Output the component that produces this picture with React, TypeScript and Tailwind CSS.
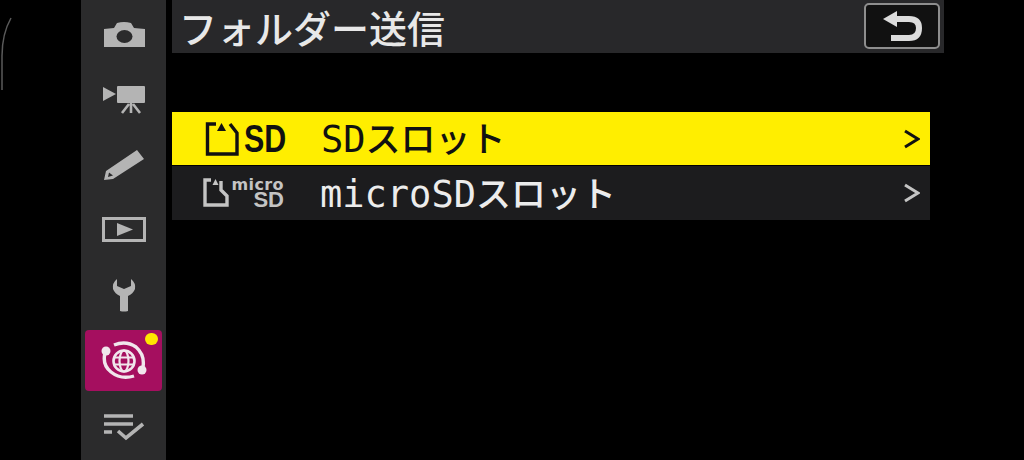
const ICON = '#b4b4b4';

function CameraIcon() {
  return (
    <svg width="44" height="28" viewBox="0 0 44 28">
      <path
        d="M2 8 L12 7 L15 2 Q22 0 29 2 L32 7 L43 8 L43 26 L2 26 Z"
        fill={ICON}
      />
      <ellipse cx="22.5" cy="15.5" rx="8" ry="6.5" fill="#2b2b2c" />
    </svg>
  );
}

function MovieIcon() {
  return (
    <svg width="44" height="30" viewBox="0 0 44 30">
      <path d="M1 2 L14 9 L1 16 Z" fill={ICON} />
      <rect x="15" y="1" width="28" height="17" rx="1" fill={ICON} />
      <path
        d="M29 18 V28 M27 19 L20 28 M31 19 L38 28"
        stroke={ICON}
        strokeWidth="2.6"
        fill="none"
      />
    </svg>
  );
}

function PencilIcon() {
  return (
    <svg width="42" height="34" viewBox="0 0 42 34">
      <path
        fillRule="evenodd"
        d="M1 32 L3 23 L34 2 L41 11 L10 31 Z M5 29 L10 27.5 L6 24.5 Z"
        fill={ICON}
      />
    </svg>
  );
}

function PlayIcon() {
  return (
    <svg width="44" height="26" viewBox="0 0 44 26">
      <rect x="1.5" y="1.5" width="41" height="22" fill="none" stroke={ICON} strokeWidth="3" />
      <path d="M15 6 L31 12.5 L15 19 Z" fill={ICON} />
    </svg>
  );
}

function WrenchIcon() {
  return (
    <svg width="24" height="34" viewBox="0 0 24 34">
      <path
        d="M5 1 L5 8 L12 11 L19 8 L19 1 Q24 5 23 11 Q21 16 16 18 L16 33 Q12 34 8 33 L8 18 Q3 16 1 11 Q0 5 5 1 Z"
        fill={ICON}
      />
    </svg>
  );
}

function NetworkIcon() {
  return (
    <svg width="46" height="42" viewBox="0 0 46 42" fill="none" stroke="#f1e6ec">
      <path d="M4 13 Q1 25 10 32 Q20 40 33 36" strokeWidth="3.4" />
      <path d="M13 5 Q25 0 35 7 Q44 15 42 27" strokeWidth="3.4" />
      <circle cx="5" cy="11" r="4.5" fill="#f1e6ec" strokeWidth="0" />
      <circle cx="41" cy="30" r="4.5" fill="#f1e6ec" strokeWidth="0" />
      <circle cx="23" cy="21" r="10.5" strokeWidth="2.6" />
      <ellipse cx="23" cy="21" rx="4.5" ry="10.5" strokeWidth="2.2" />
      <path d="M13 17.5 H33 M13 24.5 H33" strokeWidth="2.2" />
    </svg>
  );
}

function ListCheckIcon() {
  return (
    <svg width="42" height="28" viewBox="0 0 42 28" fill="none" stroke={ICON} strokeWidth="3.4">
      <path d="M1 3 H30 M1 11 H30 M1 19 H9" />
      <path d="M15 18 L23 25 L40 11" strokeWidth="3.6" />
    </svg>
  );
}

function ReturnIcon() {
  return (
    <svg width="40" height="32" viewBox="0 0 40 32" fill="none">
      <path d="M1 9 L15 1 L15 17 Z" fill="#dcdcdc" />
      <path d="M13 9 H27 Q37 9 37 18 Q37 28 27 28 H9" stroke="#dcdcdc" strokeWidth="6" />
    </svg>
  );
}

function SdCard({ color }: { color: string }) {
  return (
    <svg width="35" height="35" viewBox="0 0 35 35" fill="none">
      <path d="M11 3 H2.5 V33 H32 V12 L25 3" stroke={color} strokeWidth="3.4" />
      <path d="M12 10 L16.5 2 L21 10 Z" fill={color} />
    </svg>
  );
}

function MicroSdCard({ color }: { color: string }) {
  return (
    <svg width="26" height="30" viewBox="0 0 26 30" fill="none">
      <path d="M8 2 H2 V27 H24 V18 L18 12 V3" stroke={color} strokeWidth="3.4" />
      <path d="M9.5 7 L12.5 1 L15.5 7 Z" fill={color} />
    </svg>
  );
}

function Chevron({ color }: { color: string }) {
  return (
    <svg width="16" height="20" viewBox="0 0 16 20" fill="none">
      <path d="M1 2 L14 10 L1 18" stroke={color} strokeWidth="3" />
    </svg>
  );
}

function MenuText({ latin, kana }: { latin: string; kana: string }) {
  return (
    <span className="flex items-baseline whitespace-nowrap">
      <span className="font-['DejaVu_Sans_Mono',monospace] text-[37px] leading-none">{latin}</span>
      <span className="font-['Noto_Sans_CJK_JP',sans-serif] text-[35px] font-medium leading-none">{kana}</span>
    </span>
  );
}

export default function App() {
  return (
    <div className="relative flex h-[460px] w-[1024px] overflow-hidden bg-black pl-[81px]">
      {/* stray arc at the left edge of the photo */}
      <svg className="absolute left-0 top-[16px]" width="14" height="76" viewBox="0 0 14 76" fill="none">
        <path d="M11 2 Q2 18 2 40 V74" stroke="#5a5a5a" strokeWidth="1.5" />
      </svg>

      <nav className="flex h-full w-[85px] flex-col items-center bg-[#2b2b2c] pt-[2px]">
        <div className="flex h-[65px] items-center justify-center"><CameraIcon /></div>
        <div className="flex h-[65px] items-center justify-center"><MovieIcon /></div>
        <div className="flex h-[65px] items-center justify-center"><PencilIcon /></div>
        <div className="flex h-[65px] items-center justify-center"><PlayIcon /></div>
        <div className="flex h-[65px] items-center justify-center"><WrenchIcon /></div>
        <div className="relative my-[3px] mr-[4px] flex h-[61px] w-[77px] items-center justify-center self-end rounded-[4px] bg-[#a50f5f]">
          <NetworkIcon />
          <span className="absolute right-[4px] top-[3px] h-[12px] w-[13px] rounded-full bg-[#ffe600]" />
        </div>
        <div className="flex h-[65px] items-center justify-center"><ListCheckIcon /></div>
      </nav>

      <main className="ml-[6px] flex w-[772px] flex-col">
        <header className="flex h-[53px] items-center justify-between bg-[#28282a] pl-[7px] pr-[4px] text-[#e8e8e8]">
          <span className="font-['Noto_Sans_CJK_JP',sans-serif] text-[38px] font-medium leading-none">フォルダー送信</span>
          <span className="mb-[1px] flex h-[46px] w-[76px] items-center justify-center rounded-[5px] border-2 border-[#8e8e8e] bg-[#111111]">
            <ReturnIcon />
          </span>
        </header>

        <div className="mt-[59px] flex h-[53px] w-[758px] items-center bg-[#ffee00] pl-[33px] pr-[10px] text-[#111111]">
          <SdCard color="#111111" />
          <span className="ml-[4px] w-[46px] origin-left scale-x-[0.78] font-['Liberation_Sans',sans-serif] text-[39px] font-bold leading-none">
            SD
          </span>
          <span className="ml-[31px] flex-1"><MenuText latin="SD" kana="スロット" /></span>
          <Chevron color="#111111" />
        </div>

        <div className="mt-[1px] flex h-[54px] w-[758px] items-center bg-[#1c1c1e] pl-[31px] pr-[10px] text-[#ececec]">
          <MicroSdCard color="#c4c4c4" />
          <span className="ml-[3px] flex w-[52px] flex-col items-end leading-none text-[#c4c4c4]">
            <span className="font-['DejaVu_Sans',sans-serif] text-[16px] font-bold leading-[14px] tracking-[0.4px]">micro</span>
            <span className="font-['Liberation_Sans',sans-serif] text-[22px] font-bold leading-[16px]">SD</span>
          </span>
          <span className="ml-[36px] flex-1"><MenuText latin="microSD" kana="スロット" /></span>
          <Chevron color="#c4c4c4" />
        </div>
      </main>
    </div>
  );
}
